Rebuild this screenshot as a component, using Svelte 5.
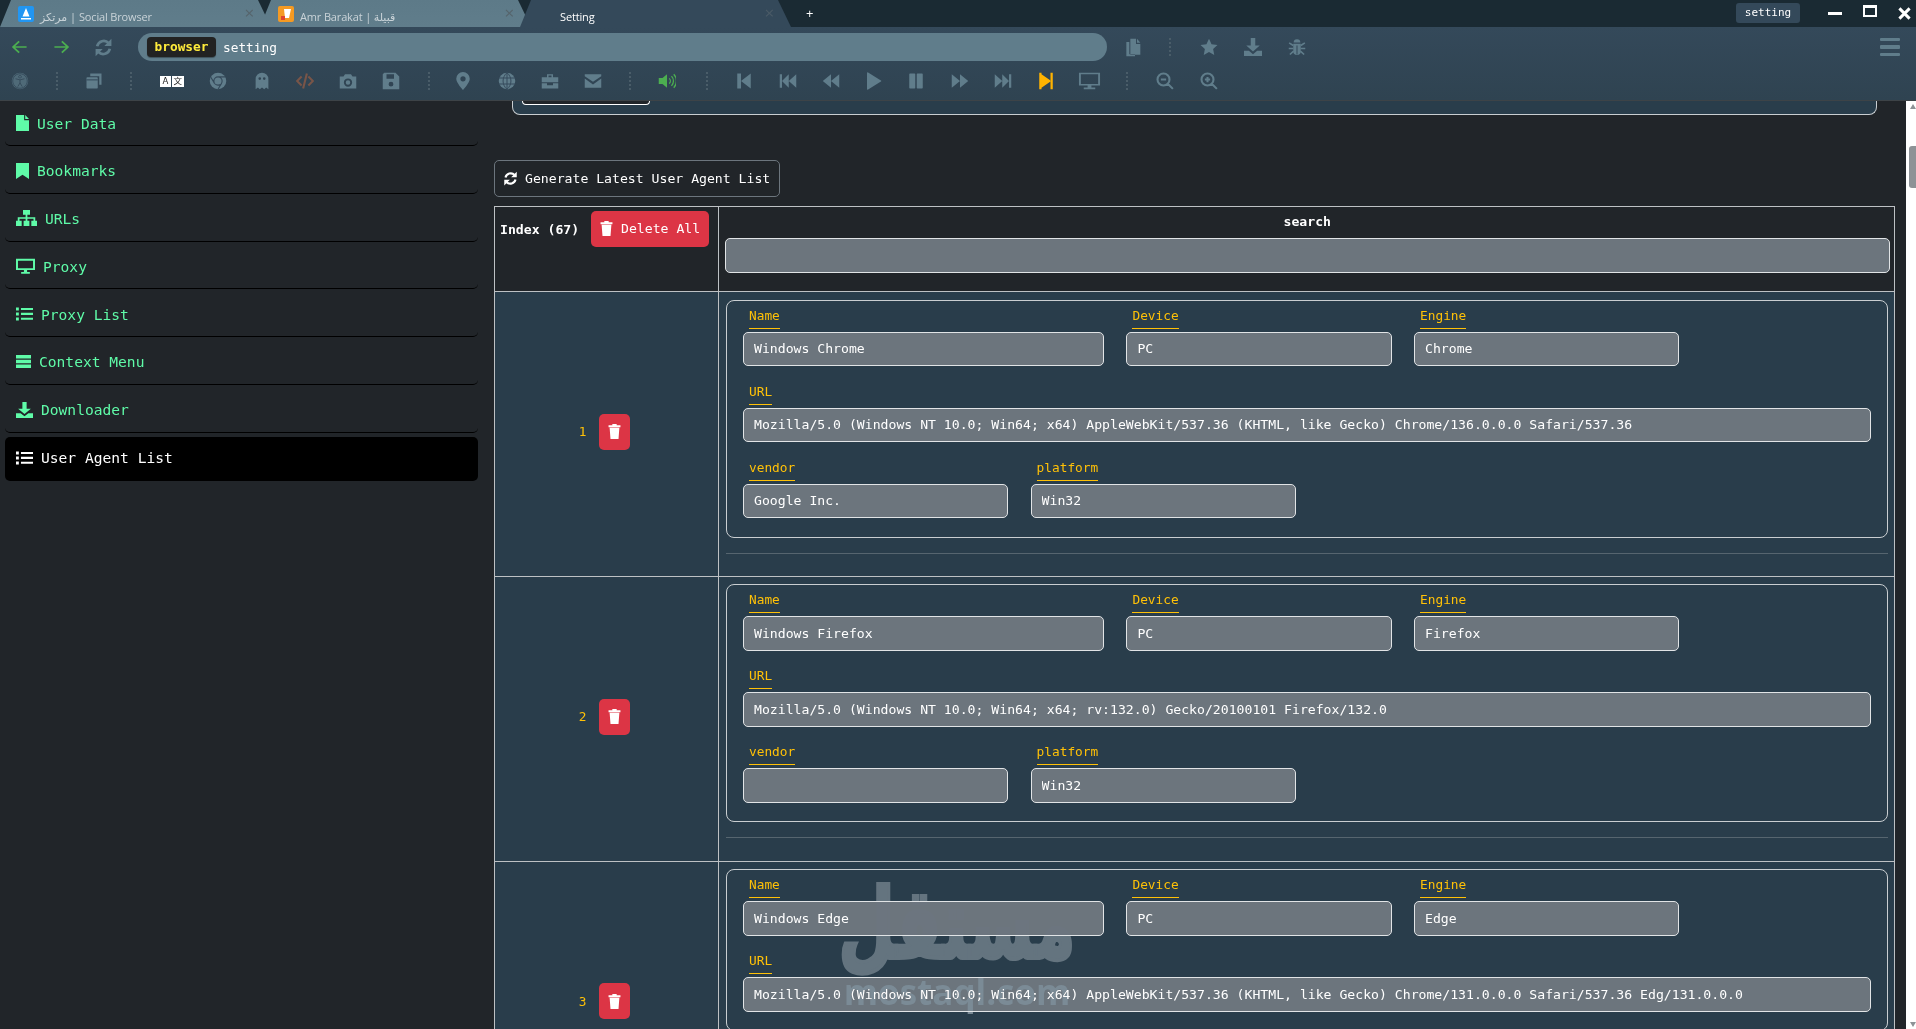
<script>
  const I = {
    file: { d: 'M0 0h15v8h9v16H0z M17 0l7 6h-7z' },
    bookmark: { d: 'M0 0h24v24l-12-6.5L0 24z' },
    sitemap: { d: 'M8 0h8v7h-8z M11 7h2v4h9v5h-2v-3h-7v3h-2v-3H4v3H2v-5h9z M0 16h6.5v8H0z M8.7 16h6.6v8H8.7z M17.5 16H24v8h-6.5z' },
    desktop: { d: 'M0 1h24v17H0z M2.5 4v11.5h19V4z M10 18h4v3h3.5v2.5h-11V21H10z' },
    list: { d: 'M0 1h4v5H0z M0 9.5h4v5H0z M0 18h4v5H0z M7 1.5h17v3.5H7z M7 10h17v3.5H7z M7 18.5h17V22H7z' },
    bars: { d: 'M0 0h24v6.5H0z M0 8.7h24v6.6H0z M0 17.5h24V24H0z' },
    download: { d: 'M9 0h6v10h6l-9 8-9-8h6z M0 17h6.5l5.5 4.5 5.5-4.5H24v7H0z' },
    trash: { d: 'M8 0h8v2h7v3H1V2h7z M3 6h18l-1.6 18H4.6z' },
    refresh: { d: 'M22 1v9h-9z M2 23v-9h9z', s: 'M4 10.5A8.5 8.5 0 0 1 18.5 6.5 M20 13.5A8.5 8.5 0 0 1 5.5 17.5', w: 3.4 },
    back: { s: 'M22 12H4 M11.5 3.5L3 12l8.5 8.5', w: 2.6 },
    fwd: { s: 'M2 12h18 M12.5 3.5L21 12l-8.5 8.5', w: 2.6 },
    copyfile: { d: 'M8 1h8.5v6.5H23V21H8z M18 1l5 5h-5z M2 5h4.5v15.5H15V23H2z' },
    star: { d: 'M12 1l3.4 7.3 7.9 1-5.8 5.4 1.5 7.9L12 18.7l-7 3.9 1.5-7.9L.7 9.3l7.9-1z' },
    bug: { d: 'M7.5 6a4.5 4.5 0 0 1 9 0z M7 7.5h10v10a5 5 0 0 1-10 0z', s: 'M1.5 6.5L7 10 M22.5 6.5L17 10 M1 14h6 M23 14h-6 M2.5 22l5-4.5 M21.5 22l-5-4.5', w: 2.2, k: 'M12 10v12', kw: 1.4 },
    windows: { d: 'M7 2h15v15h-3V5.5H7z', k: 'M2 10.5h15', kw: 1.4, f2: 'M3 7h13a1 1 0 0 1 1 1v13a1 1 0 0 1-1 1H3a1 1 0 0 1-1-1V8a1 1 0 0 1 1-1z' },
    chrome: { f2: 'M12 1a11 11 0 1 0 0 22a11 11 0 1 0 0-22z', k: 'M12 6.5a5.5 5.5 0 1 0 0 11a5.5 5.5 0 1 0 0-11z M12 6.5h10 M7.2 15L2.5 7 M16.8 15L12 23', kw: 1.5 },
    ghost: { d: 'M12 1a8.5 8.5 0 0 0-8.5 8.5V23l3-2.5L9 23l3-2.5 3 2.5 2.5-2.5 3 2.5V9.5A8.5 8.5 0 0 0 12 1z M9 7a1.5 1.5 0 1 0 0 3.5A1.5 1.5 0 1 0 9 7z M15 7a1.5 1.5 0 1 0 0 3.5A1.5 1.5 0 1 0 15 7z' },
    code: { s: 'M7.5 6l-6 6 6 6 M16.5 6l6 6-6 6 M14.5 2l-5 20', w: 2.8 },
    camera: { d: 'M8 3h8l2 3h5v16H1V6h5z M12 8.5a5.5 5.5 0 1 0 0 11a5.5 5.5 0 1 0 0-11z M12 11a3 3 0 1 1 0 6a3 3 0 1 1 0-6z' },
    save: { d: 'M3 1h15l5 5v17H1V3z M6 3v6h10V3z M12 13a3.2 3.2 0 1 0 0 6.4a3.2 3.2 0 1 0 0-6.4z' },
    pin: { d: 'M12 0a9 9 0 0 0-9 9c0 5.5 9 15 9 15s9-9.5 9-15a9 9 0 0 0-9-9z M12 5.5a3.5 3.5 0 1 1 0 7a3.5 3.5 0 1 1 0-7z' },
    globe: { f2: 'M12 1a11 11 0 1 0 0 22a11 11 0 1 0 0-22z', k: 'M1 8h22 M1 16h22 M12 1v22 M12 1c-7 6-7 16 0 22 M12 1c7 6 7 16 0 22', kw: 1.3 },
    toolbox: { d: 'M8 7V3h8v4h7v6.5H1V7z M10 4.8V7h4V4.8z M1 15h7v2.5h8V15h7v7H1z' },
    mail: { d: 'M1 3h22v2.5L12 13 1 5.5z M1 8.5l11 8 11-8V21H1z' },
    speaker: { d: 'M1 8h5l6-5v18l-6-5H1z', s: 'M15 8.5a5 5 0 0 1 0 7 M18 5.5a9.5 9.5 0 0 1 0 13 M21 3a13 13 0 0 1 0 18', w: 1.7 },
    skipstart: { d: 'M3 2h5v20H3z M8 12L21 2v20z' },
    fastback: { d: 'M1 3h3v18H1z M4 12l9-9v18z M13 12l10-9v18z' },
    backward: { d: 'M1 12L12 3v18z M12 12L23 3v18z' },
    play: { d: 'M4 1.5a1 1 0 0 1 1.5-.8L22 11a1 1 0 0 1 0 2L5.5 23.3a1 1 0 0 1-1.5-.8z' },
    pause: { d: 'M4 2h6a1 1 0 0 1 1 1v18a1 1 0 0 1-1 1H4a1 1 0 0 1-1-1V3a1 1 0 0 1 1-1z M14 2h6a1 1 0 0 1 1 1v18a1 1 0 0 1-1 1h-6a1 1 0 0 1-1-1V3a1 1 0 0 1 1-1z' },
    forward: { d: 'M12 12L1 3v18z M23 12L12 3v18z' },
    fastfwd: { d: 'M23 3h-3v18h3z M20 12l-9-9v18z M11 12L1 3v18z' },
    skipend: { d: 'M3 1h3v22H3z M6 3l13 9-13 9z M18 1h3v22h-3z' },
    monitor: { d: 'M1 1h22v17H1z M3 3v13h18V3z M10 18h4v2.5h4V23H6v-2.5h4z' },
    zoomout: { s: 'M10 2a8 8 0 1 0 0 16a8 8 0 1 0 0-16z M16 16l6.5 6.5 M6.5 10h7', w: 2.8 },
    zoomin: { s: 'M10 2a8 8 0 1 0 0 16a8 8 0 1 0 0-16z M16 16l6.5 6.5 M6.5 10h7 M10 6.5v7', w: 2.8 },
    access: { f2: 'M12 1a11 11 0 1 0 0 22a11 11 0 1 0 0-22z', k: 'M12 4.5a1.8 1.8 0 1 0 .01 0z M6 9l6 1.5L18 9 M12 10.5v4 M12 14.5l-3 5 M12 14.5l3 5 M12 2.3a9.7 9.7 0 1 0 .01 0z', kw: 1.2 }
  };

  const menu = [
    { n: 'file', t: 'User Data' },
    { n: 'bookmark', t: 'Bookmarks' },
    { n: 'sitemap', t: 'URLs' },
    { n: 'desktop', t: 'Proxy' },
    { n: 'list', t: 'Proxy List' },
    { n: 'bars', t: 'Context Menu' },
    { n: 'download', t: 'Downloader' },
    { n: 'list', t: 'User Agent List', active: true }
  ];

  const tools = [
    ['access', 'dim'], '|', ['windows'], '|', 'translate', ['chrome'], ['ghost'], ['code', 'brown'], ['camera'], ['save'], '|',
    ['pin', 'pull'], ['globe'], ['toolbox'], ['mail'], '|', ['speaker', 'green push'], '|',
    ['skipstart'], ['fastback'], ['backward'], ['play', 'pull1'], ['pause'], ['forward'], ['fastfwd'], ['skipend', 'orange'], ['monitor', 'wide'], '|',
    ['zoomout', 'push1'], ['zoomin', 'push1']
  ];

  const agents = [
    { i: 1, name: 'Windows Chrome', device: 'PC', engine: 'Chrome', vendor: 'Google Inc.', platform: 'Win32',
      url: 'Mozilla/5.0 (Windows NT 10.0; Win64; x64) AppleWebKit/537.36 (KHTML, like Gecko) Chrome/136.0.0.0 Safari/537.36' },
    { i: 2, name: 'Windows Firefox', device: 'PC', engine: 'Firefox', vendor: '', platform: 'Win32',
      url: 'Mozilla/5.0 (Windows NT 10.0; Win64; x64; rv:132.0) Gecko/20100101 Firefox/132.0' },
    { i: 3, name: 'Windows Edge', device: 'PC', engine: 'Edge',
      url: 'Mozilla/5.0 (Windows NT 10.0; Win64; x64) AppleWebKit/537.36 (KHTML, like Gecko) Chrome/131.0.0.0 Safari/537.36 Edg/131.0.0.0' }
  ];
</script>

{#snippet ic(name, cls = '')}
  <svg class="ic {cls}" viewBox="0 0 24 24" preserveAspectRatio="none" aria-hidden="true">
    {#if I[name].f2}<path d={I[name].f2} />{/if}
    {#if I[name].d}<path d={I[name].d} fill-rule="evenodd" />{/if}
    {#if I[name].s}<path d={I[name].s} class="st" stroke-width={I[name].w} />{/if}
    {#if I[name].k}<path d={I[name].k} class="kn" stroke-width={I[name].kw} />{/if}
  </svg>
{/snippet}

{#snippet field(label, value, cls)}
  <div class="field {cls}">
    <span class="lbl">{label}</span>
    <input class="inp" readonly {value} />
  </div>
{/snippet}

<div class="app">
  <header class="tabbar">
    <div class="tab">
      <span class="fav fav-blue">
        <svg viewBox="0 0 16 16"><path d="M8 2l3.5 8.5h-7z M3 12h10v1.5H3z" fill="#fff" /></svg>
      </span>
      <span class="tab-t">مرتكز | Social Browser</span>
      <span class="tab-x">×</span>
    </div>
    <div class="tab">
      <span class="fav fav-orange">
        <svg viewBox="0 0 16 16"><path d="M6 3h7l-2 9H7z" fill="#fff" /><path d="M3 10h4v4H3z" fill="#e0452c" /></svg>
      </span>
      <span class="tab-t">Amr Barakat | قبيلة</span>
      <span class="tab-x">×</span>
    </div>
    <div class="tab current">
      <span class="fav"></span>
      <span class="tab-t">Setting</span>
      <span class="tab-x">×</span>
    </div>
    <span class="plus">+</span>
    <span class="title-badge">setting</span>
    <span class="win-min"></span>
    <span class="win-max"></span>
    <svg class="win-x" viewBox="0 0 14 14"><path d="M1.5 1.5l11 11 M12.5 1.5l-11 11" stroke="#fff" stroke-width="3.2" fill="none" /></svg>
  </header>

  <div class="nav">
    <div class="nav-row first">
      <span class="cell c42 green">{@render ic('back', 's18')}</span>
      <span class="cell c42 green">{@render ic('fwd', 's18')}</span>
      <span class="cell c42">{@render ic('refresh', 's19')}</span>
      <div class="address">
        <span class="badge">browser</span>
        <span class="addr-t">setting</span>
      </div>
      <span class="cell c43 after-addr">{@render ic('copyfile', 'fileic')}</span>
      <span class="cell sepc"><i class="sep"></i></span>
      <span class="cell c43 push2">{@render ic('star')}</span>
      <span class="cell c43">{@render ic('download')}</span>
      <span class="cell c43 push1">{@render ic('bug')}</span>
      <span class="burger"><i></i><i></i><i></i></span>
    </div>
    <div class="nav-row second">
      {#each tools as t}
        {#if t === '|'}
          <span class="cell sepc"><i class="sep"></i></span>
        {:else if t === 'translate'}
          <span class="cell ctr"><span class="tr"><b>A</b><b>文</b></span></span>
        {:else}
          <span class="cell c43 {t[1] ?? ''}">{@render ic(t[0], t[1] === 'wide' ? 'wide-ic' : '')}</span>
        {/if}
      {/each}
    </div>
  </div>

  <div class="body">
    <aside class="side">
      {#each menu as m}
        <div class="item" class:active={m.active}>
          {@render ic(m.n, 'i-' + m.n)}
          <span>{m.t}</span>
        </div>
      {/each}
    </aside>

    <main class="main">
      <div class="topcard"><div class="topbtn"></div></div>

      <button class="gen">{@render ic('refresh', 'gen-ic')}<span>Generate Latest User Agent List</span></button>

      <div class="table">
        <div class="c-left head-left">
          <b>Index (67)</b>
          <button class="del-all">{@render ic('trash', 'trash-ic')}<span>Delete All</span></button>
        </div>
        <div class="c-right head-right">
          <b class="search-t">search</b>
          <input class="inp" readonly value="" />
        </div>

        {#each agents as a}
          <div class="c-left row-left">
            <span class="num">{a.i}</span>
            <button class="del">{@render ic('trash', 'trash-ic')}</button>
          </div>
          <div class="c-right row-right">
            <div class="card">
              {@render field('Name', a.name, 'span4')}
              {@render field('Device', a.device, 'span3')}
              {@render field('Engine', a.engine, 'span3')}
              {@render field('URL', a.url, 'span12')}
              {#if a.platform}
                {@render field('vendor', a.vendor, 'brk')}
                {@render field('platform', a.platform, 'span3')}
              {/if}
            </div>
            <div class="hr"></div>
          </div>
        {/each}
      </div>

      <div class="mark">
        <div class="mark-ar">مستقل</div>
        <div class="mark-en">mostaql.com</div>
      </div>
    </main>

    <div class="scroll">
      <i class="arr up"></i>
      <i class="thumb"></i>
      <i class="arr down"></i>
    </div>
  </div>
</div>

<style>
  :global(body) {
    margin: 0;
    background: #212529;
    overflow: hidden;
  }
  .app {
    height: 1029px;
    overflow: hidden;
    display: flex;
    flex-direction: column;
    font-family: "DejaVu Sans Mono", "Liberation Mono", monospace;
    color: #fff;
    background: #212529;
  }
  .ic {
    width: 18px;
    height: 18px;
    fill: currentColor;
    display: block;
    flex: none;
  }
  .st {
    fill: none;
    stroke: currentColor;
  }
  .kn {
    fill: none;
    stroke: #34495a;
  }

  /* tab bar */
  .tabbar {
    height: 27px;
    flex: none;
    background: #1a2a33;
    display: flex;
    align-items: flex-start;
    font-family: "Open Sans", "DejaVu Sans", sans-serif;
  }
  .tab {
    width: 271px;
    height: 27px;
    flex: none;
    margin-right: -11px;
    background: linear-gradient(#5d7a88, #607d8b);
    clip-path: polygon(11px 0, calc(100% - 13px) 0, 100% 100%, 0 100%);
    display: flex;
    align-items: center;
    padding: 6px 17px 0 18px;
    box-sizing: border-box;
    font-size: 11px;
    letter-spacing: -0.15px;
    color: #c9d3d8;
  }
  .tab.current {
    background: #34495a;
    color: #fff;
    position: relative;
  }
  .fav {
    width: 16px;
    height: 16px;
    flex: none;
    margin: -6px 6px 0 0;
    border-radius: 2px;
  }
  .fav svg { display: block; width: 16px; height: 16px; }
  .fav-blue { background: #2196f3; }
  .fav-orange { background: #f59a23; }
  .tab-t { white-space: nowrap; }
  .tab-x {
    margin: -7px 0 0 auto;
    font-size: 17px;
    line-height: 14px;
    color: #56646c;
  }
  .current .tab-x { color: #4a5a66; }
  .plus {
    margin: 5px 0 0 26px;
    font-size: 13px;
    line-height: 16px;
    color: #fff;
  }
  .title-badge {
    margin: 3px 0 0 auto;
    width: 64px;
    height: 20px;
    background: #34495a;
    border-radius: 3px;
    text-align: center;
    font-family: "DejaVu Sans Mono", monospace;
    font-size: 11px;
    line-height: 20px;
  }
  .win-min {
    margin: 12px 0 0 28px;
    width: 14px;
    height: 3px;
    background: #fff;
  }
  .win-max {
    margin: 5px 0 0 21px;
    width: 14px;
    height: 12px;
    box-sizing: border-box;
    border: 2px solid #fff;
    border-top-width: 3px;
    background: #1a2a33;
  }
  .win-x {
    margin: 7px 5px 0 21px;
    width: 13px;
    height: 13px;
  }

  /* nav */
  .nav {
    height: 74px;
    flex: none;
    box-sizing: border-box;
    background: linear-gradient(#34495a, #2f4351);
    border-bottom: 1px solid #3d4347;
    color: #607d8b;
  }
  .nav-row {
    display: flex;
    align-items: center;
    margin-left: -2px;
  }
  .nav-row.first {
    height: 28px;
    margin-top: 6px;
  }
  .nav-row.second {
    height: 26px;
    margin-top: 7px;
  }
  .cell {
    display: flex;
    align-items: center;
    justify-content: center;
    flex: none;
  }
  .c42 { width: 42px; }
  .c43 { width: 43.3px; }
  .sepc { width: 31px; }
  .ctr { width: 50px; }
  .pull { margin-left: -2.5px; }
  .push { margin-right: 2.5px; }
  .pull1 { margin-left: -1px; }
  .push1 { margin-left: 1px; }
  .push2 { margin-left: 2px; }
  .sep {
    display: block;
    height: 18px;
    border-left: 2px dotted #4a5d69;
  }
  .green { color: #4caf50; }
  .brown { color: #795548; }
  .orange { color: #ffb300; }
  .dim { color: #4f6a78; }
  .s18 { width: 17px; height: 16px; }
  .s19 { width: 19px; height: 19px; }
  .fileic { width: 16px; height: 19px; }
  .wide-ic { width: 23px; height: 18px; }
  .address {
    margin-left: 14px;
    width: 969px;
    height: 28px;
    flex: none;
    box-sizing: border-box;
    background: #607d8b;
    border-radius: 14px;
    display: flex;
    align-items: center;
    padding-left: 9px;
    color: #fff;
    font-size: 12.8px;
  }
  .badge {
    width: 69px;
    height: 20px;
    box-sizing: border-box;
    border-radius: 4px;
    background: #222;
    color: #ffeb3b;
    font-weight: 700;
    text-align: center;
    line-height: 20px;
    box-shadow: 0 1px 1px rgba(0, 0, 0, 0.35);
  }
  .addr-t { margin-left: 7px; }
  .after-addr { margin-left: 4.4px; }
  .burger {
    margin: 0 16px 0 auto;
    width: 20px;
    display: flex;
    flex-direction: column;
    gap: 4px;
  }
  .burger i {
    height: 3.5px;
    background: #607d8b;
    border-radius: 1px;
  }
  .tr {
    display: flex;
    gap: 1px;
  }
  .tr b {
    width: 11.5px;
    height: 11px;
    background: #fff;
    color: #222;
    font: 400 8.5px/11px "DejaVu Sans", "Noto Sans CJK SC", sans-serif;
    text-align: center;
  }

  /* layout */
  .body {
    flex: 1;
    display: flex;
    min-height: 0;
  }
  .side {
    width: 473px;
    flex: none;
    padding: 0 5px;
  }
  .item {
    height: 47.83px;
    box-sizing: border-box;
    padding: 2.5px 0 0 11px;
    display: flex;
    align-items: center;
    gap: 8px;
    border-bottom: 1px solid #000;
    border-radius: 0 0 5px 5px;
    color: #5ffba8;
    font-size: 14.6px;
  }
  .item:first-child {
    height: 45px;
    padding-top: 0;
  }
  .item.active {
    height: 44px;
    margin-top: 4px;
    padding: 0 0 2px 11px;
    background: #000;
    color: #fff;
    border-radius: 5px;
    border-bottom: 0;
  }
  .i-file, .i-bookmark { width: 13px; height: 16px; }
  .i-sitemap { width: 21px; height: 16px; }
  .i-desktop { width: 19px; height: 16px; }
  .i-list { width: 17px; height: 14px; }
  .i-bars { width: 15px; height: 13px; }
  .i-download { width: 17px; height: 16px; }

  .main {
    flex: 1;
    min-width: 0;
    padding: 0 11px;
    position: relative;
    overflow: hidden;
  }
  .topcard {
    height: 14px;
    box-sizing: border-box;
    margin: 0 18px 45px;
    background: #293d4b;
    border: 1px solid #c9ced1;
    border-top: 0;
    border-radius: 0 0 8px 8px;
    padding-left: 9px;
  }
  .topbtn {
    width: 128px;
    height: 4px;
    box-sizing: border-box;
    background: #212529;
    border: 1px solid #fff;
    border-top: 0;
    border-radius: 0 0 4px 4px;
  }
  button {
    font-family: inherit;
    color: #fff;
    cursor: pointer;
  }
  .gen {
    display: flex;
    align-items: center;
    gap: 7px;
    width: 286px;
    height: 37px;
    box-sizing: border-box;
    margin: 0 0 9px;
    padding: 0 0 0 8px;
    background: transparent;
    border: 1px solid #6c757d;
    border-radius: 5px;
    font-size: 13.15px;
  }
  .gen-ic { width: 15px; height: 15px; }

  .table {
    display: grid;
    grid-template-columns: 224px 1fr;
    border: 1px solid #bdc1c4;
    border-bottom: 0;
    font-size: 13.15px;
  }
  .c-left {
    border-right: 1px solid #bdc1c4;
    border-bottom: 1px solid #bdc1c4;
    box-sizing: border-box;
  }
  .c-right {
    border-bottom: 1px solid #bdc1c4;
    box-sizing: border-box;
    min-width: 0;
  }
  .head-left {
    height: 85px;
    display: flex;
    align-items: flex-start;
    padding: 4px 0 0 5px;
  }
  .head-left b {
    margin-top: 10px;
    width: 91px;
    flex: none;
    line-height: 18px;
  }
  .del-all {
    width: 118px;
    height: 36px;
    padding: 0 0 2px 9px;
    display: flex;
    align-items: center;
    gap: 8px;
    background: #dc3545;
    border: 0;
    border-radius: 5px;
    font-size: 13.15px;
  }
  .trash-ic { width: 13px; height: 15px; }
  .head-right {
    height: 85px;
    padding: 5px 4px 0 5.5px;
    display: flex;
    flex-direction: column;
  }
  .search-t {
    height: 20px;
    line-height: 20px;
    margin-bottom: 6px;
    text-align: center;
  }
  .inp {
    display: block;
    width: 100%;
    height: 34.5px;
    box-sizing: border-box;
    padding: 0 10px;
    background: #6c757d;
    border: 1px solid #e1e4e6;
    border-radius: 5px;
    color: #fff;
    font: 13.15px "DejaVu Sans Mono", "Liberation Mono", monospace;
    outline: none;
  }
  .row-left {
    height: 284.8px;
    background: #293d4b;
    display: flex;
    align-items: center;
    justify-content: center;
    gap: 13px;
    padding: 0 4px 4px 0;
  }
  .num {
    color: #ffc107;
    font-size: 12.8px;
  }
  .del {
    width: 31px;
    height: 36px;
    padding: 0;
    display: flex;
    align-items: center;
    justify-content: center;
    background: #dc3545;
    border: 0;
    border-radius: 5px;
  }
  .row-right {
    height: 284.8px;
    background: #293d4b;
    padding: 7.6px 6px 0 7px;
  }
  .card {
    box-sizing: border-box;
    border: 1px solid #c9ced1;
    border-radius: 8px;
    padding: 0 16px 18.5px;
    display: grid;
    grid-template-columns: repeat(12, 1fr);
    column-gap: 22.4px;
    row-gap: 10.5px;
  }
  .field {
    min-width: 0;
    display: flex;
    flex-direction: column;
    align-items: flex-start;
  }
  .span4 { grid-column: span 4; }
  .span3 { grid-column: span 3; }
  .span12 { grid-column: span 12; }
  .brk { grid-column: 1 / span 3; }
  .lbl {
    margin: 6px 0 3px 6px;
    padding-bottom: 3px;
    border-bottom: 1px solid #ffc107;
    color: #ffc107;
    font-size: 12.8px;
    line-height: 18px;
  }
  .hr {
    margin-top: 15px;
    height: 1px;
    background: #56656f;
  }

  /* watermark */
  .mark {
    position: absolute;
    left: 314px;
    top: 790px;
    width: 320px;
    text-align: center;
    pointer-events: none;
    mix-blend-mode: lighten;
  }
  .mark-ar {
    font: 700 72px/84px "DejaVu Sans", sans-serif;
    color: #64747f;
    -webkit-text-stroke: 3px #64747f;
    transform: scale(0.9, 1.35);
    transform-origin: 50% 80%;
  }
  .mark-en {
    font: 700 35px/34px "Open Sans", sans-serif;
    color: #7b8b96;
    margin-top: 0;
  }

  /* scrollbar */
  .scroll {
    width: 10px;
    flex: none;
    background: #fff;
    display: flex;
    flex-direction: column;
    align-items: flex-end;
  }
  .thumb {
    width: 7px;
    height: 42px;
    margin-top: 37px;
    background: #8d9296;
    border-radius: 3px 0 0 3px;
  }
  .arr {
    width: 0;
    height: 0;
    border-left: 3.5px solid transparent;
    border-right: 3.5px solid transparent;
  }
  .arr.up {
    margin-top: 3px;
    border-bottom: 5px solid #8d9296;
  }
  .arr.down {
    margin-top: auto;
    margin-bottom: 2px;
    border-top: 5px solid #8d9296;
  }
</style>
